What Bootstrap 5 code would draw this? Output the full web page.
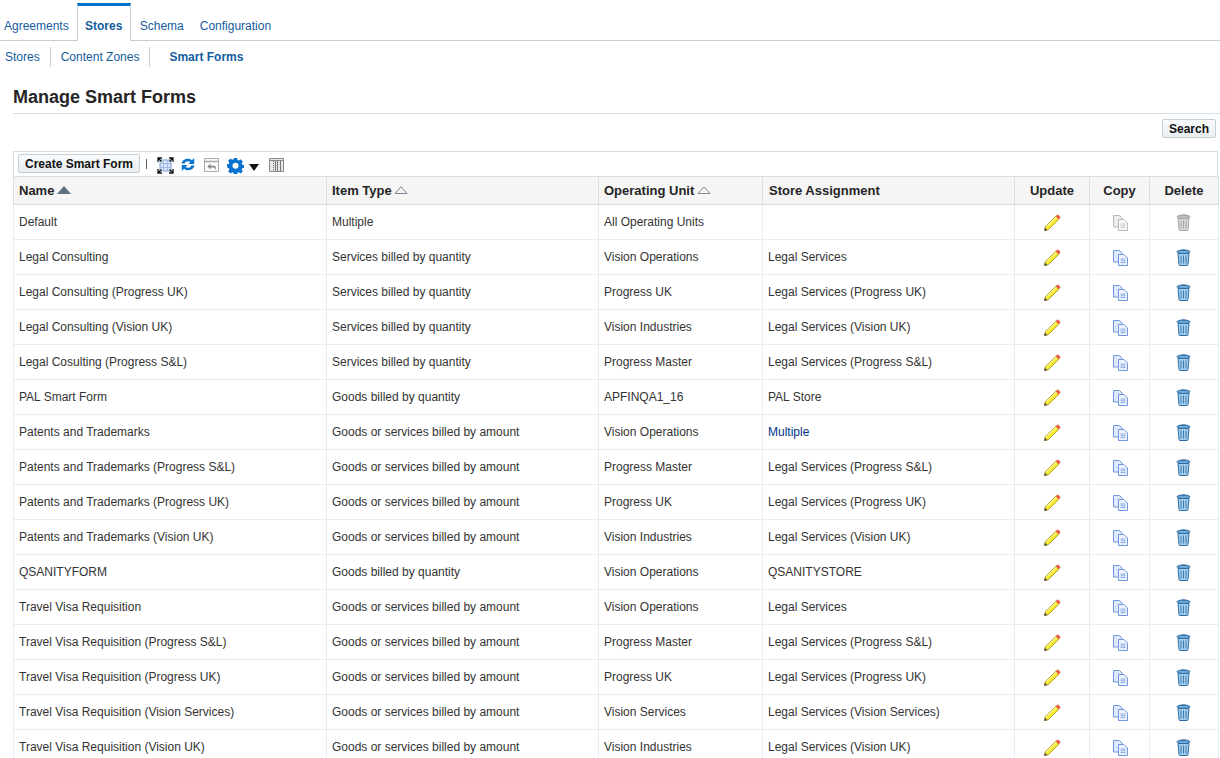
<!DOCTYPE html>
<html lang="en"><head><meta charset="utf-8"><title>Manage Smart Forms</title>
<link href="https://cdn.jsdelivr.net/npm/bootstrap@5.3.0/dist/css/bootstrap.min.css" rel="stylesheet">
<style>
html,body{height:758px;overflow:hidden;background:#fff}
body{font-family:"Liberation Sans",Arial,sans-serif;font-size:12px;color:#333}
a{text-decoration:none}
.tabbar{height:41px;border-bottom:1px solid #c4ced7;padding-top:3px}
.tabitem{display:block;height:38px;padding:10px 4px 0;color:#145c9e;font-size:12px;line-height:26px}
.tabitem.tab-second{padding:10px 7px 0 9px}
.tabitem.tab-third{padding:10px 4px 0 9px}
.tabitem.tab-on{width:54px;height:38px;margin-left:4px;padding:7px 0 0;text-align:center;font-weight:700;background:#fff;border-top:3px solid #0572ce;border-left:1px solid #c4ced7;border-right:1px solid #c4ced7}
.subbar{height:32px;padding-top:6px}
.subitem{color:#145c9e;line-height:20px;padding:0 10px 0 5px;font-size:12px}
.subitem.sub-sep{border-right:1px solid #c4ced7}
.subitem.sub-mid{padding:0 10px}
.subitem.sub-on{font-weight:700;padding-left:19px}
.pagehead{margin:14px 0 0 13px;height:27px;border-bottom:1px solid #d6dfe6;font-size:18px;font-weight:700;line-height:20px;color:#252525}
.searchrow{height:37px;padding:6px 4px 0 0;margin-top:-1px}
.btnplain{font-family:inherit;font-size:12px;font-weight:700;line-height:14px;color:#111;background:linear-gradient(#fafbfc,#e8edf0);border:1px solid #c4ced7;border-radius:2px;padding:1px 6px;height:19px}
.gridbox{margin-left:13px;margin-top:1px;width:1205px;border:1px solid #d6dfe6;border-bottom:0}
.toolbar{height:25px;padding:2px 0 0 4px}
.tsep{width:1px;height:10px;background:#666;margin:5px 9px 0 6px}
.gridtable{table-layout:fixed;width:1205px;margin:-1px -1px 0;border-collapse:collapse;font-size:12px;color:#333}
.gridtable th{height:28px;background:#f5f5f5;border:1px solid #d6dfe6;padding:0 5px;font-size:13px;font-weight:700;color:#252525;vertical-align:middle;line-height:15px}
.gridtable td{height:35px;border:1px solid #e9edf0;padding:0 5px;vertical-align:middle;color:#333;background:#fff;line-height:15px}
.gridtable th:nth-child(4){padding-left:6px}
.gridtable .cellc{text-align:center;padding:0}
.gridtable a{color:#003286}
.sortmark{display:inline-block;vertical-align:1px;margin-left:-1px}
.ico{display:inline-block;vertical-align:middle}
.cellc .ico{margin-top:1px}
.cellc .ico-copy{margin-left:2px}
.cellc .ico-bin{margin-right:2px}
.tool-expand{margin:3px 0 0 1px}
.tool-refresh{margin:3px 0 0 6px}
.tool-return{margin:3px 0 0 7px}
.tool-gear{margin:3px 0 0 7px}
.tool-caret{margin:10px 0 0 5px}
.tool-cols{margin:4px 0 0 10px}
</style></head>
<body>
<svg width="0" height="0" class="d-none">
<defs>
<symbol id="pen" viewBox="0 0 18 18">
<path d="M1.500 16.500l.9-4L12.800 2.200l3.100 3L5.400 15.600z" fill="#f7e92f" stroke="#a08a10" stroke-width=".8" stroke-linejoin="round"/>
<path d="M3.600 12.600L13.500 2.900" stroke="#fdf8a0" stroke-width="1.200"/>
<path d="M12.800 2.200l1.200-1.100c.5-.4 1-.4 1.400 0l1.500 1.500c.4.4.4 1 0 1.400l-1 1.200z" fill="#f0503a" stroke="#d98a70" stroke-width=".5"/>
<path d="M1.200 16.800l.7-3 2.400 2.400z" fill="#444"/>
</symbol>
<symbol id="copyon" viewBox="0 0 17 18">
<path d="M1.500 1.500h6l2.500 2.500v9h-8.500z" fill="#dfe9fb" stroke="#6f97dc"/>
<path d="M6.500 5.500h5.500l3.500 3.500v7.500h-9z" fill="#eef3fd" stroke="#6f97dc"/>
<path d="M8.500 10h5M8.500 11.800h5M8.500 13.600h5" stroke="#86a9e6"/>
</symbol>
<symbol id="copyoff" viewBox="0 0 17 18">
<path d="M1.500 1.500h6l2.500 2.500v9h-8.500z" fill="#eee" stroke="#b9b9b9"/>
<path d="M6.500 5.500h5.500l3.500 3.500v7.500h-9z" fill="#f8f8f8" stroke="#b9b9b9"/>
<path d="M8.500 10h5M8.500 11.800h5M8.500 13.600h5" stroke="#c9c9c9"/>
</symbol>
<symbol id="binon" viewBox="0 0 15 17">
<ellipse cx="7.500" cy="2.800" rx="6.500" ry="1.800" fill="#6fa8d6" stroke="#2d6da3"/>
<path d="M5.500 1.200h4" stroke="#2d6da3" stroke-width="1.200"/>
<path d="M2 4.500l1 11q.1 1 1 1h7q.9 0 1-1l1-11z" fill="#a5cdec" stroke="#2d6da3"/>
<path d="M5 6.500v8M7.500 6.500v8M10 6.500v8" stroke="#3b7db3"/>
</symbol>
<symbol id="binoff" viewBox="0 0 15 17">
<ellipse cx="7.500" cy="2.800" rx="6.500" ry="1.800" fill="#bdbdbd" stroke="#a3a3a3"/>
<path d="M5.500 1.200h4" stroke="#a3a3a3" stroke-width="1.200"/>
<path d="M2 4.500l1 11q.1 1 1 1h7q.9 0 1-1l1-11z" fill="#d9d9d9" stroke="#a3a3a3"/>
<path d="M5 6.500v8M7.500 6.500v8M10 6.500v8" stroke="#a3a3a3"/>
</symbol>
</defs>
</svg>

<div class="tabbar d-flex">
<a class="tabitem" href="#">Agreements</a>
<a class="tabitem tab-on" href="#">Stores</a>
<a class="tabitem tab-second" href="#">Schema</a>
<a class="tabitem tab-third" href="#">Configuration</a>
</div>
<div class="subbar d-flex align-items-start">
<a class="subitem sub-sep" href="#">Stores</a>
<a class="subitem sub-sep sub-mid" href="#">Content Zones</a>
<a class="subitem sub-on" href="#">Smart Forms</a>
</div>
<div class="pagehead">Manage Smart Forms</div>
<div class="searchrow d-flex justify-content-end align-items-start"><button class="btnplain" type="button">Search</button></div>
<div class="gridbox">
<div class="toolbar d-flex align-items-start">
<button class="btnplain" type="button">Create Smart Form</button>
<span class="tsep"></span>
<svg class="ico tool-expand" width="17" height="17" viewBox="0 0 17 17"><rect x="3" y="3" width="11" height="11" fill="#dbe5f8" stroke="#7f9fd8"/><path d="M3 6.500h11M3 10.500h11M6.500 3v11M10.500 3v11" stroke="#9db7e6"/><path d="M1 5V1h4M12 1h4v4M16 12v4h-4M5 16H1v-4M1 1l3.500 3.500M16 1l-3.500 3.500M16 16l-3.500-3.500M1 16l3.500-3.500" fill="none" stroke="#111" stroke-width="1.300"/></svg>
<svg class="ico tool-refresh" width="16" height="15" viewBox="0 0 15 15"><path d="M1 6.500C1.500 3.500 4.500 1.800 7.500 1.800c1.700 0 3 .6 3.800 1.500l2.400-2v5.700H8l2-2c-.6-.5-1.500-.8-2.500-.8-1.700 0-2.900.8-3.200 2.300z" fill="#0572ce"/><path d="M14 8.500c-.5 3-3.500 4.700-6.500 4.700-1.700 0-3-.6-3.800-1.500l-2.400 2V8H7l-2 2c.6.500 1.500.8 2.500.8 1.700 0 2.900-.8 3.200-2.300z" fill="#0572ce"/></svg>
<svg class="ico tool-return" width="17" height="16" viewBox="0 0 17 16"><path d="M1.500 1.500h14v13h-14z" fill="#fafafa" stroke="#a9a9a9"/><path d="M1.500 4.500h14" stroke="#a9a9a9" stroke-width="1.500"/><path d="M7.500 6.500L4.500 9.500l3 3V10.500h3c1 0 1.500.6 1.500 2.500 1.500-2 1.200-4.300-1.500-4.300h-3z" fill="#888"/></svg>
<svg class="ico tool-gear" width="17" height="17" viewBox="0 0 18 18"><path fill="#0572ce" fill-rule="evenodd" d="M7.300 1h3.400l.4 2.200 1.400.6 1.900-1.300 2.400 2.400-1.300 1.900.6 1.400 2.200.4v2.800l-2.200.4-.6 1.400 1.300 1.900-2.400 2.400-1.900-1.300-1.400.6-.4 1.800H7.300l-.4-1.800-1.400-.6-1.900 1.300-2.400-2.400 1.300-1.900-.6-1.400L-.3 10.600V7.800l2.200-.4.600-1.400-1.300-1.900 2.400-2.400 1.900 1.300 1.400-.6zM9 6a3.200 3.200 0 1 0 0 6.400A3.200 3.200 0 0 0 9 6z"/></svg>
<svg class="ico tool-caret" width="10" height="7" viewBox="0 0 10 7"><path d="M0 0h10L5 7z" fill="#111"/></svg>
<svg class="ico tool-cols" width="15" height="14" viewBox="0 0 15 14"><path d="M.5.500h14v13H.5z" fill="#e6e6e6" stroke="#8b8b8b"/><path d="M.5 2.500h14" stroke="#8b8b8b"/><path d="M6.500 3v10M8.500 3v10M11.500 3v10" stroke="#777"/><path d="M4.500 3v10" stroke="#777" stroke-dasharray="1 1"/></svg>
</div>
<table class="gridtable">
<colgroup><col style="width:313px"><col style="width:272px"><col style="width:164px"><col style="width:252px"><col style="width:75px"><col style="width:60px"><col style="width:69px"></colgroup>
<thead><tr>
<th>Name <svg class="sortmark" width="14" height="8" viewBox="0 0 14 8"><path d="M7 0l7 8H0z" fill="#5a7186"/></svg></th>
<th>Item Type <svg class="sortmark" width="14" height="8" viewBox="0 0 14 8"><path d="M7 .8l6 6.700H1z" fill="none" stroke="#7b8a96"/></svg></th>
<th>Operating Unit <svg class="sortmark" width="14" height="8" viewBox="0 0 14 8"><path d="M7 .8l6 6.700H1z" fill="none" stroke="#7b8a96"/></svg></th>
<th>Store Assignment</th>
<th class="cellc">Update</th><th class="cellc">Copy</th><th class="cellc">Delete</th>
</tr></thead>
<tbody>
<tr><td>Default</td><td>Multiple</td><td>All Operating Units</td><td></td><td class="cellc"><svg class="ico" width="18" height="18"><use href="#pen"/></svg></td><td class="cellc"><svg class="ico ico-copy" width="17" height="18"><use href="#copyoff"/></svg></td><td class="cellc"><svg class="ico ico-bin" width="15" height="17"><use href="#binoff"/></svg></td></tr>
<tr><td>Legal Consulting</td><td>Services billed by quantity</td><td>Vision Operations</td><td>Legal Services</td><td class="cellc"><svg class="ico" width="18" height="18"><use href="#pen"/></svg></td><td class="cellc"><svg class="ico ico-copy" width="17" height="18"><use href="#copyon"/></svg></td><td class="cellc"><svg class="ico ico-bin" width="15" height="17"><use href="#binon"/></svg></td></tr>
<tr><td>Legal Consulting (Progress UK)</td><td>Services billed by quantity</td><td>Progress UK</td><td>Legal Services (Progress UK)</td><td class="cellc"><svg class="ico" width="18" height="18"><use href="#pen"/></svg></td><td class="cellc"><svg class="ico ico-copy" width="17" height="18"><use href="#copyon"/></svg></td><td class="cellc"><svg class="ico ico-bin" width="15" height="17"><use href="#binon"/></svg></td></tr>
<tr><td>Legal Consulting (Vision UK)</td><td>Services billed by quantity</td><td>Vision Industries</td><td>Legal Services (Vision UK)</td><td class="cellc"><svg class="ico" width="18" height="18"><use href="#pen"/></svg></td><td class="cellc"><svg class="ico ico-copy" width="17" height="18"><use href="#copyon"/></svg></td><td class="cellc"><svg class="ico ico-bin" width="15" height="17"><use href="#binon"/></svg></td></tr>
<tr><td>Legal Cosulting (Progress S&amp;L)</td><td>Services billed by quantity</td><td>Progress Master</td><td>Legal Services (Progress S&amp;L)</td><td class="cellc"><svg class="ico" width="18" height="18"><use href="#pen"/></svg></td><td class="cellc"><svg class="ico ico-copy" width="17" height="18"><use href="#copyon"/></svg></td><td class="cellc"><svg class="ico ico-bin" width="15" height="17"><use href="#binon"/></svg></td></tr>
<tr><td>PAL Smart Form</td><td>Goods billed by quantity</td><td>APFINQA1_16</td><td>PAL Store</td><td class="cellc"><svg class="ico" width="18" height="18"><use href="#pen"/></svg></td><td class="cellc"><svg class="ico ico-copy" width="17" height="18"><use href="#copyon"/></svg></td><td class="cellc"><svg class="ico ico-bin" width="15" height="17"><use href="#binon"/></svg></td></tr>
<tr><td>Patents and Trademarks</td><td>Goods or services billed by amount</td><td>Vision Operations</td><td><a href="#">Multiple</a></td><td class="cellc"><svg class="ico" width="18" height="18"><use href="#pen"/></svg></td><td class="cellc"><svg class="ico ico-copy" width="17" height="18"><use href="#copyon"/></svg></td><td class="cellc"><svg class="ico ico-bin" width="15" height="17"><use href="#binon"/></svg></td></tr>
<tr><td>Patents and Trademarks (Progress S&amp;L)</td><td>Goods or services billed by amount</td><td>Progress Master</td><td>Legal Services (Progress S&amp;L)</td><td class="cellc"><svg class="ico" width="18" height="18"><use href="#pen"/></svg></td><td class="cellc"><svg class="ico ico-copy" width="17" height="18"><use href="#copyon"/></svg></td><td class="cellc"><svg class="ico ico-bin" width="15" height="17"><use href="#binon"/></svg></td></tr>
<tr><td>Patents and Trademarks (Progress UK)</td><td>Goods or services billed by amount</td><td>Progress UK</td><td>Legal Services (Progress UK)</td><td class="cellc"><svg class="ico" width="18" height="18"><use href="#pen"/></svg></td><td class="cellc"><svg class="ico ico-copy" width="17" height="18"><use href="#copyon"/></svg></td><td class="cellc"><svg class="ico ico-bin" width="15" height="17"><use href="#binon"/></svg></td></tr>
<tr><td>Patents and Trademarks (Vision UK)</td><td>Goods or services billed by amount</td><td>Vision Industries</td><td>Legal Services (Vision UK)</td><td class="cellc"><svg class="ico" width="18" height="18"><use href="#pen"/></svg></td><td class="cellc"><svg class="ico ico-copy" width="17" height="18"><use href="#copyon"/></svg></td><td class="cellc"><svg class="ico ico-bin" width="15" height="17"><use href="#binon"/></svg></td></tr>
<tr><td>QSANITYFORM</td><td>Goods billed by quantity</td><td>Vision Operations</td><td>QSANITYSTORE</td><td class="cellc"><svg class="ico" width="18" height="18"><use href="#pen"/></svg></td><td class="cellc"><svg class="ico ico-copy" width="17" height="18"><use href="#copyon"/></svg></td><td class="cellc"><svg class="ico ico-bin" width="15" height="17"><use href="#binon"/></svg></td></tr>
<tr><td>Travel Visa Requisition</td><td>Goods or services billed by amount</td><td>Vision Operations</td><td>Legal Services</td><td class="cellc"><svg class="ico" width="18" height="18"><use href="#pen"/></svg></td><td class="cellc"><svg class="ico ico-copy" width="17" height="18"><use href="#copyon"/></svg></td><td class="cellc"><svg class="ico ico-bin" width="15" height="17"><use href="#binon"/></svg></td></tr>
<tr><td>Travel Visa Requisition (Progress S&amp;L)</td><td>Goods or services billed by amount</td><td>Progress Master</td><td>Legal Services (Progress S&amp;L)</td><td class="cellc"><svg class="ico" width="18" height="18"><use href="#pen"/></svg></td><td class="cellc"><svg class="ico ico-copy" width="17" height="18"><use href="#copyon"/></svg></td><td class="cellc"><svg class="ico ico-bin" width="15" height="17"><use href="#binon"/></svg></td></tr>
<tr><td>Travel Visa Requisition (Progress UK)</td><td>Goods or services billed by amount</td><td>Progress UK</td><td>Legal Services (Progress UK)</td><td class="cellc"><svg class="ico" width="18" height="18"><use href="#pen"/></svg></td><td class="cellc"><svg class="ico ico-copy" width="17" height="18"><use href="#copyon"/></svg></td><td class="cellc"><svg class="ico ico-bin" width="15" height="17"><use href="#binon"/></svg></td></tr>
<tr><td>Travel Visa Requisition (Vision Services)</td><td>Goods or services billed by amount</td><td>Vision Services</td><td>Legal Services (Vision Services)</td><td class="cellc"><svg class="ico" width="18" height="18"><use href="#pen"/></svg></td><td class="cellc"><svg class="ico ico-copy" width="17" height="18"><use href="#copyon"/></svg></td><td class="cellc"><svg class="ico ico-bin" width="15" height="17"><use href="#binon"/></svg></td></tr>
<tr><td>Travel Visa Requisition (Vision UK)</td><td>Goods or services billed by amount</td><td>Vision Industries</td><td>Legal Services (Vision UK)</td><td class="cellc"><svg class="ico" width="18" height="18"><use href="#pen"/></svg></td><td class="cellc"><svg class="ico ico-copy" width="17" height="18"><use href="#copyon"/></svg></td><td class="cellc"><svg class="ico ico-bin" width="15" height="17"><use href="#binon"/></svg></td></tr>
</tbody></table>
</div>
</body></html>
